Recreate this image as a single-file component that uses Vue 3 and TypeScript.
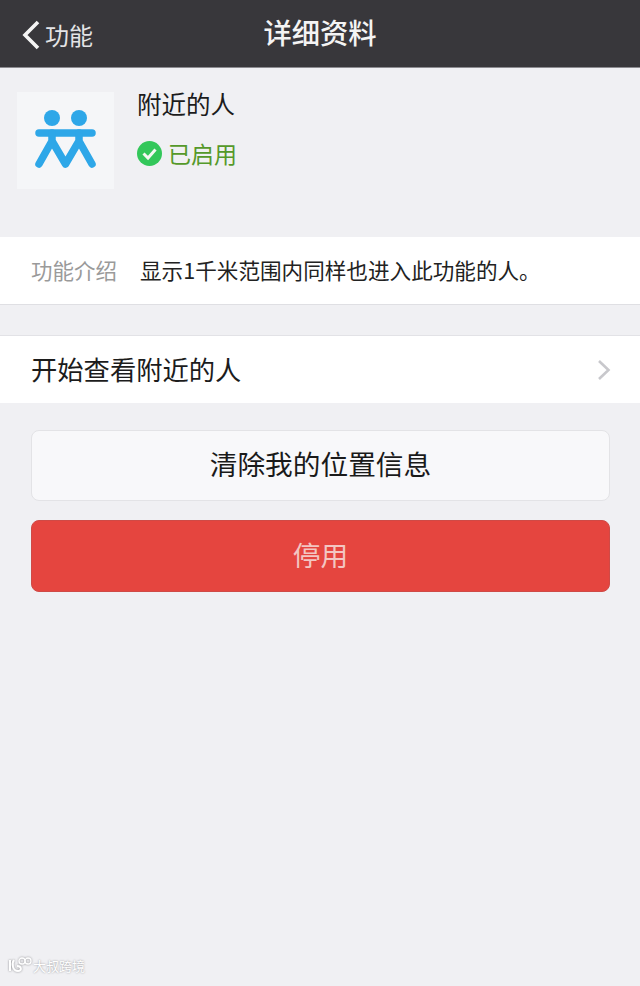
<script setup lang="ts">
const title = '详细资料'
</script>

<template>
  <div class="page">
    <header class="nav">
      <div class="back">
        <svg class="back-icon" width="20" height="32" viewBox="0 0 20 32"><path d="M17 3 L4 16 L17 29" fill="none" stroke="#f4f4f4" stroke-width="3.6" /></svg>
        <span>功能</span>
      </div>
      <h1>{{ title }}</h1>
    </header>

    <section class="profile">
      <div class="logo">
        <svg width="97" height="97" viewBox="0 0 97 97">
          <circle cx="35" cy="26" r="8" fill="#2ea7e8" />
          <circle cx="62" cy="26" r="8" fill="#2ea7e8" />
          <path d="M22 41 H75" stroke="#2ea7e8" stroke-width="7.500" stroke-linecap="round" />
          <path d="M35 41 V49 L22 72 M35 49 L48.500 72 L62 49 V41 M62 49 L75 72" fill="none" stroke="#2ea7e8" stroke-width="7.500" stroke-linecap="round" stroke-linejoin="round" />
        </svg>
      </div>
      <div class="profile-text">
        <div class="name">附近的人</div>
        <div class="status">
          <svg width="25" height="25" viewBox="0 0 25 25">
            <circle cx="12.500" cy="12.500" r="12.500" fill="#33c75a" />
            <path d="M6.500 12.500 L11 17 L18.500 8.500" fill="none" stroke="#f4f8f2" stroke-width="3" />
          </svg>
          <span>已启用</span>
        </div>
      </div>
    </section>

    <section class="intro">
      <span class="label">功能介绍</span>
      <span class="desc">显示1千米范围内同样也进入此功能的人。</span>
    </section>

    <section class="row">
      <span class="row-text">开始查看附近的人</span>
      <svg width="14" height="22" viewBox="0 0 14 22"><path d="M2 2 L11.500 11 L2 20" fill="none" stroke="#c8c8cc" stroke-width="2.600" /></svg>
    </section>

    <div class="actions">
      <button class="btn light">清除我的位置信息</button>
      <button class="btn danger">停用</button>
    </div>

    <footer class="mark">
      <svg width="24" height="16" viewBox="0 0 24 16">
        <path d="M2 3 V14 M6 3 C3 7 5 14 10 14 C14 14 14 9 9 9" fill="none" stroke="#fff" stroke-width="2" />
        <circle cx="14" cy="4" r="3" fill="none" stroke="#fff" stroke-width="1.300" />
        <circle cx="20" cy="4" r="3" fill="none" stroke="#fff" stroke-width="1.300" />
      </svg>
      <span>大叔跨境</span>
    </footer>
  </div>
</template>

<style>
html, body { margin: 0; background: #f0f0f3; }
</style>

<style scoped>
.page {
  width: 640px;
  height: 986px;
  background: #f0f0f3;
  font-family: "Noto Sans CJK SC", "Liberation Sans", sans-serif;
  color: #1a1a1a;
  display: flex;
  flex-direction: column;
  overflow: hidden;
}
.nav {
  height: 68px;
  flex: none;
  box-sizing: border-box;
  background: #38373b;
  border-bottom: 1px solid #8c8b90;
  color: #f4f4f4;
  position: relative;
  display: flex;
  align-items: center;
  justify-content: center;
  padding-bottom: 2px;
}
.nav h1 {
  margin: 0;
  font-size: 28.300px;
  font-weight: 500;
  line-height: 1;
}
.back {
  position: absolute;
  left: 21px;
  top: 19px;
  display: flex;
  align-items: center;
  gap: 4px;
  font-size: 24px;
  color: #e4e4e6;
  line-height: 32px;
}
.back-icon { flex: none; }
.profile {
  height: 169px;
  flex: none;
  padding: 24px 0 0 17px;
  box-sizing: border-box;
  display: flex;
  gap: 23px;
  align-items: flex-start;
}
.logo {
  width: 97px;
  height: 97px;
  background: #f5f6f8;
  display: flex;
}
.profile-text {
  display: flex;
  flex-direction: column;
  gap: 17px;
  margin-top: -3px;
}
.name {
  font-size: 24.500px;
  line-height: 30px;
  color: #1c1c1c;
}
.status {
  display: flex;
  align-items: center;
  gap: 6px;
  font-size: 23px;
  line-height: 34px;
  color: #55992a;
}
.intro {
  height: 68px;
  flex: none;
  box-sizing: border-box;
  background: #fff;
  border-bottom: 1px solid #dfdfe3;
  display: flex;
  align-items: center;
  padding: 0 0 3px 31px;
  gap: 23px;
}
.label {
  font-size: 21.500px;
  color: #9a9a9a;
}
.desc {
  font-size: 21.600px;
  color: #222;
}
.row {
  margin-top: 30px;
  height: 68px;
  flex: none;
  box-sizing: border-box;
  background: #fff;
  border-top: 1px solid #e2e2e6;
  display: flex;
  align-items: center;
  justify-content: space-between;
  padding: 0 29px 0 31px;
}
.row-text {
  font-size: 26.300px;
  color: #1c1c1c;
  margin-top: -3px;
}
.actions {
  margin-top: 27px;
  padding: 0 30px 0 31px;
  display: flex;
  flex-direction: column;
  gap: 19px;
}
.btn {
  display: block;
  width: 100%;
  font-family: inherit;
  font-size: 27.700px;
  border-radius: 8px;
  padding: 0 0 5px;
  margin: 0;
}
.light {
  height: 71px;
  background: #f8f8fa;
  border: 1px solid #e3e3e6;
  color: #1a1a1a;
}
.danger {
  height: 72px;
  background: #e5453f;
  border: 1px solid #cf4a46;
  color: #f3c6c2;
}
.mark {
  margin-top: auto;
  height: 29px;
  padding-left: 8px;
  display: flex;
  align-items: flex-start;
  gap: 1px;
  color: #fff;
  font-size: 13px;
  line-height: 18px;
  text-shadow: 0 0 2px #8e8e92;
}
.mark svg { filter: drop-shadow(0 0 1px #8e8e92); }
</style>
